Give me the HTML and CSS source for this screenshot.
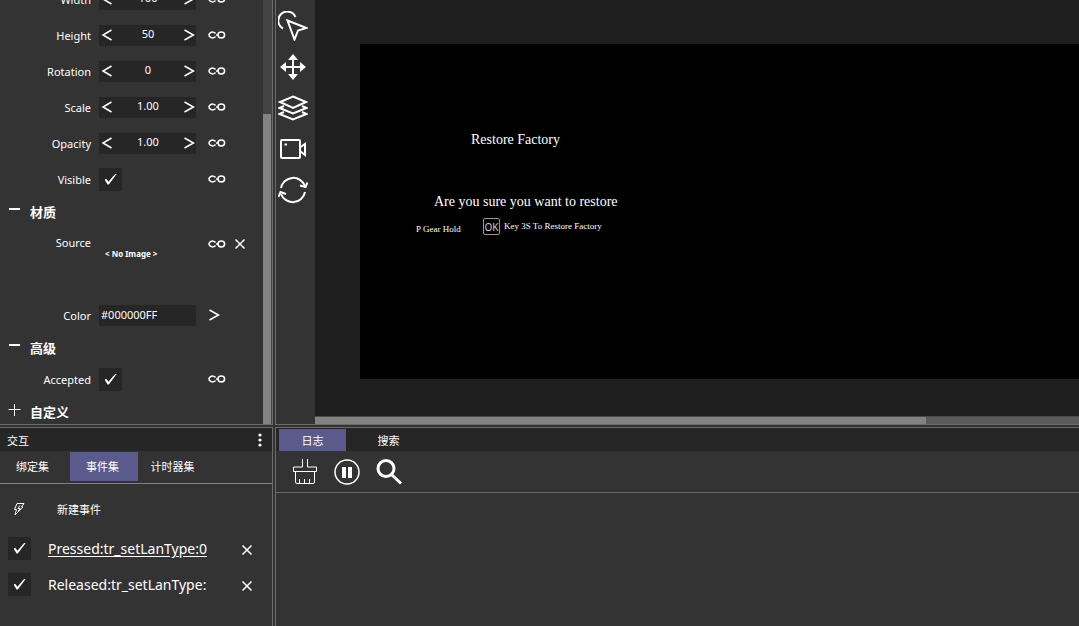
FILE: index.html
```html
<!DOCTYPE html>
<html lang="zh-CN">
<head>
  <meta charset="UTF-8">
  <meta name="viewport" content="width=device-width, initial-scale=1.0">
  <title>UI Editor</title>
  <link rel="stylesheet" href="styles.css">
</head>
<body>

  <!-- Shared icons -->
  <svg class="sprite" aria-hidden="true">
    <symbol id="i-left" viewBox="0 0 12 12"><path d="M10.500 1 2 6l8.500 5"/></symbol>
    <symbol id="i-right" viewBox="0 0 12 12"><path d="m1.500 1 9 5-9 5"/></symbol>
    <symbol id="i-link" viewBox="0 0 18 10"><path d="M7.500 3.500A3.500 2.900 0 1 0 7.500 6.500M8 5h2"/><ellipse cx="13.300" cy="5" rx="3.300" ry="2.900"/></symbol>
    <symbol id="i-close" viewBox="0 0 12 12"><path d="m1.500 1.500 9 9M10.500 1.500l-9 9"/></symbol>
  </svg>

  <div class="app">

    <section class="panel properties">
      <div class="prop-list">
        <div class="prop">
          <label for="width">Width</label>
          <div class="stepper">
            <button aria-label="Decrease width"><svg><use href="#i-left"/></svg></button>
            <input type="text" id="width" value="100">
            <button aria-label="Increase width"><svg><use href="#i-right"/></svg></button>
          </div>
          <button class="link-btn" aria-label="Bind width"><svg><use href="#i-link"/></svg></button>
        </div>
        <div class="prop">
          <label for="height">Height</label>
          <div class="stepper">
            <button aria-label="Decrease height"><svg><use href="#i-left"/></svg></button>
            <input type="text" id="height" value="50">
            <button aria-label="Increase height"><svg><use href="#i-right"/></svg></button>
          </div>
          <button class="link-btn" aria-label="Bind height"><svg><use href="#i-link"/></svg></button>
        </div>
        <div class="prop">
          <label for="rotation">Rotation</label>
          <div class="stepper">
            <button aria-label="Decrease rotation"><svg><use href="#i-left"/></svg></button>
            <input type="text" id="rotation" value="0">
            <button aria-label="Increase rotation"><svg><use href="#i-right"/></svg></button>
          </div>
          <button class="link-btn" aria-label="Bind rotation"><svg><use href="#i-link"/></svg></button>
        </div>
        <div class="prop">
          <label for="scale">Scale</label>
          <div class="stepper">
            <button aria-label="Decrease scale"><svg><use href="#i-left"/></svg></button>
            <input type="text" id="scale" value="1.00">
            <button aria-label="Increase scale"><svg><use href="#i-right"/></svg></button>
          </div>
          <button class="link-btn" aria-label="Bind scale"><svg><use href="#i-link"/></svg></button>
        </div>
        <div class="prop">
          <label for="opacity">Opacity</label>
          <div class="stepper">
            <button aria-label="Decrease opacity"><svg><use href="#i-left"/></svg></button>
            <input type="text" id="opacity" value="1.00">
            <button aria-label="Increase opacity"><svg><use href="#i-right"/></svg></button>
          </div>
          <button class="link-btn" aria-label="Bind opacity"><svg><use href="#i-link"/></svg></button>
        </div>
        <div class="prop">
          <label for="visible">Visible</label>
          <input type="checkbox" class="check" id="visible" checked>
          <button class="link-btn" aria-label="Bind visible"><svg><use href="#i-link"/></svg></button>
        </div>

        <h2 class="group-title"><svg viewBox="0 0 14 14"><path d="M1 5h11"/></svg>材质</h2>
        <div class="prop prop-source">
          <span class="prop-name">Source</span>
          <span class="no-image">&lt; No Image &gt;</span>
          <button class="link-btn" aria-label="Bind source"><svg><use href="#i-link"/></svg></button>
          <button class="close-btn" aria-label="Clear source"><svg><use href="#i-close"/></svg></button>
        </div>
        <div class="prop">
          <label for="color">Color</label>
          <input type="text" class="color-input" id="color" value="#000000FF">
          <button class="pick-btn" aria-label="Pick color"><svg><use href="#i-right"/></svg></button>
        </div>

        <h2 class="group-title"><svg viewBox="0 0 14 14"><path d="M1 5h11"/></svg>高级</h2>
        <div class="prop">
          <label for="accepted">Accepted</label>
          <input type="checkbox" class="check" id="accepted" checked>
          <button class="link-btn" aria-label="Bind accepted"><svg><use href="#i-link"/></svg></button>
        </div>

        <h2 class="group-title"><svg viewBox="0 0 14 14"><path class="thin" d="M.5 5.500h12M6.500 0v12"/></svg>自定义</h2>
      </div>
      <div class="scroll-y"><div class="thumb"></div></div>
    </section>

    <section class="panel stage">
      <nav class="tools">
        <button aria-label="Select">
          <svg viewBox="0 0 30 30"><path d="M17.500 6A9 9 0 1 0 5 17.500"/><path d="m9.500 9.500 19 7.500-8.500 2.500-3.500 9z"/></svg>
        </button>
        <button aria-label="Move">
          <svg viewBox="0 0 30 30"><path d="M15 5v20M5 15h20"/><path class="solid" d="m15 2 5 6H10zM15 28l5-6H10zM2 15l6-5v10zM28 15l-6-5v10z"/></svg>
        </button>
        <button aria-label="Layers">
          <svg viewBox="0 0 30 30"><path d="m15 3.500 13 5.500-13 6L2 9z"/><path d="M6 13 1.500 15 15 20.500 28.500 15 24 13M6 19l-4.500 2L15 26.500 28.500 21 24 19"/></svg>
        </button>
        <button aria-label="Camera">
          <svg viewBox="0 0 30 30"><rect x="3" y="6" width="19" height="18" rx="1"/><path d="M6.500 10.500H9"/><path d="m22 13.500 5-3.500v11l-5-4"/></svg>
        </button>
        <button aria-label="Refresh">
          <svg viewBox="0 0 30 30"><path d="M3 13A12.500 12.500 0 0 1 27 11M27 17A12.500 12.500 0 0 1 3 19"/><path d="m22 10.500 5.500 1.500 2-4.500M.5 22l2-5 5.500 2"/></svg>
        </button>
      </nav>
      <div class="viewport">
        <div class="canvas">
          <span class="node title">Restore Factory</span>
          <span class="node question">Are you sure you want to restore</span>
          <span class="node gear">P Gear Hold</span>
          <span class="node ok">OK</span>
          <span class="node key">Key 3S To Restore Factory</span>
        </div>
        <div class="scroll-x"><div class="thumb"></div></div>
      </div>
    </section>

    <section class="panel events">
      <header class="panel-head">
        <span>交互</span>
        <button aria-label="Menu"><svg viewBox="0 0 4 14"><circle cx="2" cy="2" r="1.600"/><circle cx="2" cy="7" r="1.600"/><circle cx="2" cy="12" r="1.600"/></svg></button>
      </header>
      <div class="tabs">
        <button>绑定集</button>
        <button class="active">事件集</button>
        <button>计时器集</button>
      </div>
      <button class="new-event">
        <svg viewBox="0 0 14 14"><path d="M5 1.500h7L9.500 5H11L3 13l1.500-5.500H2.500z M8 3.500 6 6.500h2L6.500 9"/></svg>
        新建事件
      </button>
      <div class="event">
        <input type="checkbox" class="check" id="ev-pressed" aria-label="Enable Pressed" checked>
        <a class="current" href="#pressed">Pressed:tr_setLanType:0</a>
        <button class="close-btn" aria-label="Delete Pressed"><svg><use href="#i-close"/></svg></button>
      </div>
      <div class="event">
        <input type="checkbox" class="check" id="ev-released" aria-label="Enable Released" checked>
        <a href="#released">Released:tr_setLanType:</a>
        <button class="close-btn" aria-label="Delete Released"><svg><use href="#i-close"/></svg></button>
      </div>
    </section>

    <section class="panel log">
      <div class="log-tabs">
        <button class="active">日志</button>
        <button>搜索</button>
      </div>
      <div class="log-tools">
        <button aria-label="Clear">
          <svg viewBox="0 0 28 28"><path class="thin" d="M11.500 1v8H2.500v4.500h23V9h-9V1M4.500 13.500V24q0 1.500 1.500 1.500h16q1.500 0 1.500-1.500V13.500M8.500 25v-4M13.500 25v-4M18.500 25v-4"/></svg>
        </button>
        <button aria-label="Pause">
          <svg viewBox="0 0 28 28"><circle class="ring" cx="14" cy="14" r="12"/><path class="solid" d="M9 9h4v11H9zM15 9h4v11h-4z"/></svg>
        </button>
        <button aria-label="Search">
          <svg viewBox="0 0 28 28"><circle class="heavy" cx="11" cy="10.500" r="8"/><path class="heavy" d="m17 17 9 8.500"/></svg>
        </button>
      </div>
    </section>

  </div>

</body>
</html>
```
FILE: styles.css
```css
:root {
  --panel: #333;
  --dark: #262626;
  --stage: #1e1e1e;
  --line: #6b6b6b;
  --thumb: #838383;
  --accent: #5a5a8c;
  --text: #fff;
}
* {
  box-sizing: border-box;
}
body {
  margin: 0;
  background: var(--panel);
  color: var(--text);
  font-family: "Noto Sans", "Noto Sans CJK SC", sans-serif;
  font-size: 11px;
}
button,
input {
  margin: 0;
  padding: 0;
  border: none;
  background: none;
  color: inherit;
  font: inherit;
}
button {
  cursor: pointer;
}
svg {
  display: block;
  fill: none;
  stroke: #fff;
  stroke-width: 2;
}
.sprite {
  display: none;
}
.thin {
  stroke-width: 1;
}
.ring {
  stroke-width: 1.5;
}
.heavy {
  stroke-width: 3;
}
.solid {
  fill: #fff;
  stroke: none;
}

/* Main layout, the gap between the lines is the splitter */
.app {
  display: grid;
  grid-template-columns: 273px 1fr;
  grid-template-rows: 1fr 199px;
  gap: 2px;
  height: 100vh;
}
.panel {
  min-width: 0;
  min-height: 0;
  overflow: hidden;
}
.properties,
.stage {
  border-bottom: 1px solid var(--line);
}
.events,
.log {
  border-top: 1px solid var(--line);
}
.properties,
.events {
  border-right: 1px solid var(--line);
}
.stage,
.log {
  border-left: 1px solid var(--line);
}

/* Properties */
.properties {
  display: flex;
}
.prop-list {
  flex: 1;
  margin-top: -19px;
}
.prop {
  display: grid;
  grid-template-columns: 91px 97px 18px 12px;
  align-items: center;
  column-gap: 8px;
  height: 36px;
}
.prop label,
.prop-name {
  text-align: right;
}
.stepper {
  display: flex;
  align-items: center;
  height: 21px;
  padding: 0 1px 0 2px;
  background: var(--dark);
}
.stepper input {
  flex: 1;
  min-width: 0;
  padding-bottom: 3px;
  text-align: center;
}
.stepper svg,
.pick-btn svg,
.close-btn svg {
  width: 12px;
  height: 12px;
}
.stepper svg,
.pick-btn svg,
.link-btn svg,
.close-btn svg {
  stroke-width: 1.5;
}
.link-btn,
.pick-btn,
.prop .close-btn {
  margin-left: 4px;
}
.link-btn svg {
  width: 18px;
  height: 10px;
}
.check {
  appearance: none;
  display: grid;
  place-content: center;
  width: 23px;
  height: 23px;
  background: var(--dark);
}
.check:checked::before {
  content: "";
  width: 12px;
  height: 11px;
  background: #fff;
  clip-path: polygon(0 55%, 14% 48%, 33% 76%, 92% 0, 100% 6%, 36% 100%, 26% 100%);
}
.prop-source {
  align-items: start;
  height: 72px;
  padding-top: 10px;
}
.prop-source .link-btn {
  padding-top: 4px;
}
.prop-source .close-btn {
  padding-top: 3px;
}
.no-image {
  padding: 12px 0 0 6px;
  font-family: "Liberation Sans Narrow", "Noto Sans", sans-serif;
  font-size: 8px;
  font-weight: bold;
  line-height: 14px;
}
.color-input {
  width: 100%;
  height: 21px;
  padding: 0 2px 2px;
  background: var(--dark);
}
.group-title {
  display: flex;
  align-items: center;
  gap: 8px;
  height: 28px;
  margin: 0;
  padding-left: 8px;
  font-size: 13px;
}
.group-title svg {
  width: 14px;
  height: 14px;
}

/* Scrollbars */
.scroll-y {
  display: flex;
  align-items: flex-end;
  width: 9px;
  background: #444;
}
.scroll-y .thumb {
  width: 8px;
  height: 73%;
  background: var(--thumb);
}
.scroll-x {
  height: 8px;
  border-top: 1px solid #4a4a4a;
  background: #5b5b5b;
}
.scroll-x .thumb {
  width: 80%;
  height: 100%;
  background: var(--thumb);
}

/* Stage */
.stage {
  display: flex;
}
.tools {
  display: flex;
  flex-direction: column;
  gap: 11px;
  width: 39px;
  padding: 11px 2px;
}
.tools svg {
  width: 30px;
  height: 30px;
}
.viewport {
  display: flex;
  flex: 1;
  flex-direction: column;
  min-width: 0;
  background: var(--stage);
}
.canvas {
  position: relative;
  flex: 1;
  margin: 44px 0 37px 45px;
  background: #000;
  font-family: "Liberation Serif", serif;
  white-space: nowrap;
}
.node {
  position: absolute;
}
.title {
  left: 111px;
  top: 88px;
  font-size: 14px;
}
.question {
  left: 74px;
  top: 150px;
  font-size: 14px;
}
.gear {
  left: 56px;
  top: 180px;
  font-size: 9px;
}
.ok {
  left: 123px;
  top: 174px;
  width: 17px;
  height: 17px;
  border: 1px solid #999;
  border-radius: 2px;
  color: #ccc;
  font-family: "Noto Sans", sans-serif;
  font-size: 10px;
  line-height: 17px;
  text-align: center;
}
.key {
  left: 144px;
  top: 177px;
  font-size: 9px;
}

/* Events */
.panel-head {
  display: flex;
  align-items: center;
  justify-content: space-between;
  height: 23px;
  padding: 0 10px 0 7px;
  background: var(--dark);
}
.panel-head svg {
  width: 4px;
  height: 14px;
  fill: #fff;
  stroke: none;
}
.tabs {
  display: flex;
  gap: 2px;
  height: 33px;
  padding: 1px 0 2px;
  border-bottom: 1px solid #838383;
}
.tabs button {
  width: 68px;
  padding: 0 3px 2px 0;
}
.tabs .active,
.log-tabs .active {
  background: var(--accent);
}
.new-event {
  display: flex;
  align-items: center;
  gap: 31px;
  height: 46px;
  padding: 3px 0 0 12px;
}
.new-event svg {
  width: 14px;
  height: 14px;
  stroke-width: 1;
}
.event {
  display: flex;
  align-items: center;
  height: 36px;
  padding: 0 19px 0 8px;
  font-size: 14px;
}
.event a {
  flex: 1;
  margin-left: 17px;
  color: inherit;
  text-decoration: none;
  white-space: nowrap;
}
.event .current {
  text-decoration: underline;
  text-underline-offset: 2px;
}
.event .close-btn {
  padding-top: 4px;
}

/* Log */
.log-tabs {
  display: flex;
  gap: 9px;
  height: 23px;
  padding: 1px 0 0 3px;
  background: var(--dark);
}
.log-tabs button {
  width: 67px;
}
.log-tools {
  display: flex;
  gap: 14px;
  height: 42px;
  padding: 6px 15px;
  border-bottom: 1px solid var(--line);
}
.log-tools svg {
  width: 28px;
  height: 28px;
}
```
